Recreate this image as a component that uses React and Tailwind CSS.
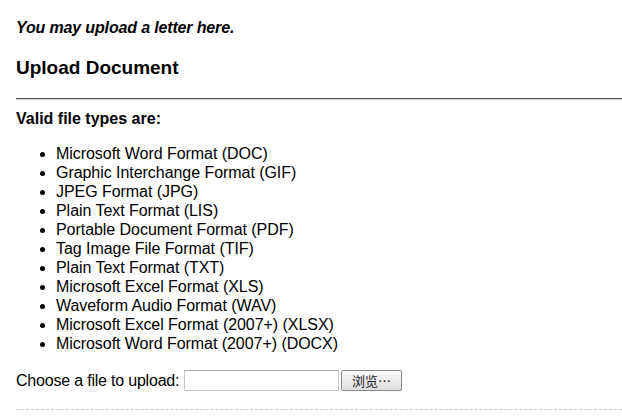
const FILE_TYPES = [
  'Microsoft Word Format (DOC)',
  'Graphic Interchange Format (GIF)',
  'JPEG Format (JPG)',
  'Plain Text Format (LIS)',
  'Portable Document Format (PDF)',
  'Tag Image File Format (TIF)',
  'Plain Text Format (TXT)',
  'Microsoft Excel Format (XLS)',
  'Waveform Audio Format (WAV)',
  'Microsoft Excel Format (2007+) (XLSX)',
  'Microsoft Word Format (2007+) (DOCX)',
];

export default function App() {
  return (
    <div className="min-h-[416px] bg-white pl-4 text-black font-['Liberation_Sans',Arial,sans-serif] text-[16px] leading-[19px]">
      <p className="pt-[18px] font-bold italic tracking-[-0.15px]">You may upload a letter here.</p>

      <h2 className="mt-[19px] text-[19px] leading-[23px] font-bold">Upload Document</h2>

      <div className="mt-[19px] border-t border-t-[#555] border-b border-b-[#ccc]" />

      <p className="mt-[9px] font-bold">Valid file types are:</p>

      <ul className="mt-[16px] pl-[40px] list-disc tracking-[-0.05px]">
        {FILE_TYPES.map(t => (
          <li key={t}>{t}</li>
        ))}
      </ul>

      <div className="mt-[17px] flex items-center">
        <span className="w-[168px] whitespace-nowrap tracking-[-0.2px]">Choose a file to upload:</span>
        <div className="w-[155px] h-[21px] border border-[#c8c8c8] border-t-[#a8a8a8] bg-white" />
        <button className="ml-[2px] w-[61px] h-[21px] rounded-[2px] border border-[#8a8a8a] bg-gradient-to-b from-[#fafafa] to-[#dcdcdc] text-[13px] leading-none text-[#222] font-['Noto_Sans_CJK_SC',sans-serif]">
          浏览…
        </button>
      </div>

      <div className="mt-[18px] border-t border-dashed border-[#ccc]" />
    </div>
  );
}
